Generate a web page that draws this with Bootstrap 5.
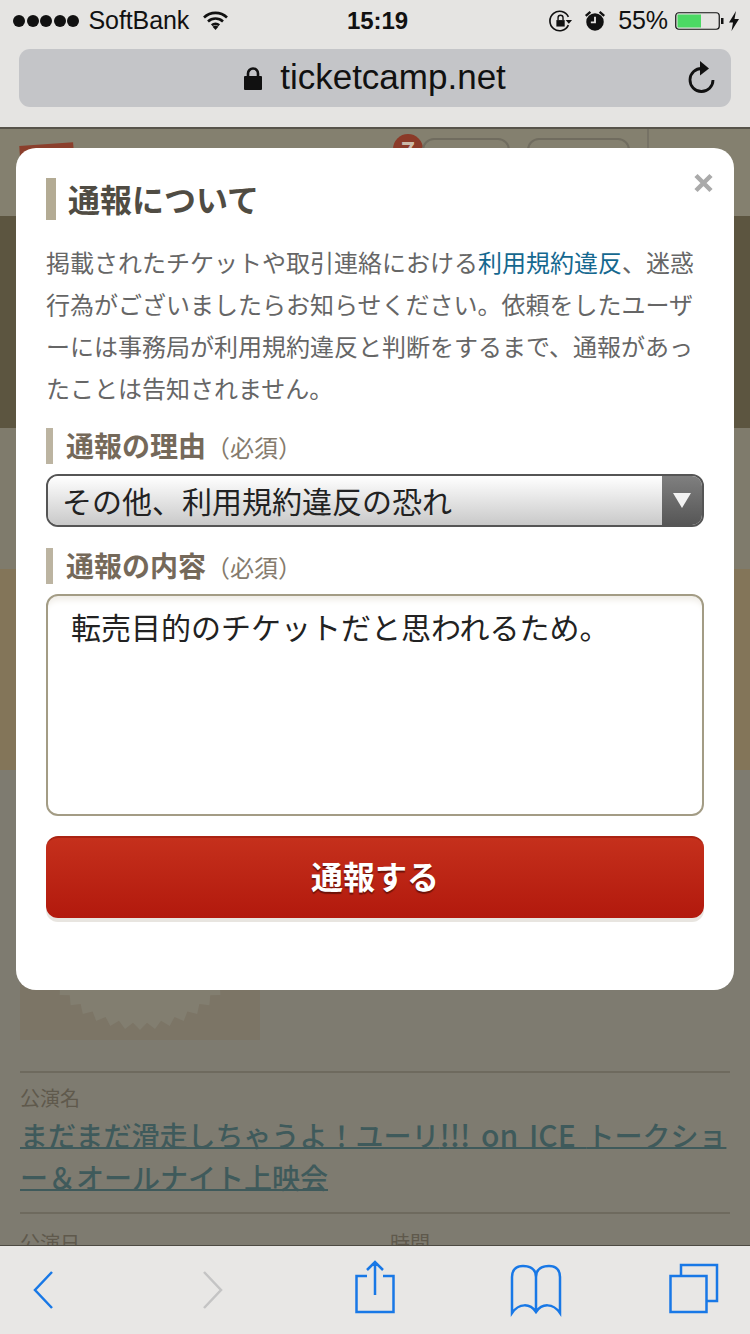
<!DOCTYPE html>
<html lang="ja">
<head>
<meta charset="utf-8">
<title>通報について</title>
<link rel="stylesheet" href="https://cdn.jsdelivr.net/npm/bootstrap@5.3.0/dist/css/bootstrap.min.css">
<style>
:root{--jp:"Noto Sans CJK JP","Liberation Sans",sans-serif;--ui:"Liberation Sans","Noto Sans CJK JP",sans-serif;}
html,body{height:1334px;overflow:hidden;}
body{width:750px;font-family:var(--jp);background:#827e70;}
.shell{height:1334px;}
/* browser chrome */
.chrome-top{height:129px;background:#e5e4e2;border-bottom:2px solid #57534a;flex:none;font-family:var(--ui);}
.statusrow{height:41px;display:grid;grid-template-columns:1fr auto 1fr;align-items:center;padding:0 10px 0 13px;color:#111;font-size:25px;letter-spacing:-.1px;}
.clock{font-weight:700;font-size:24px;padding-left:2px;}
.sigdot{width:12px;height:12px;border-radius:50%;background:#111;display:inline-block;margin-right:1.500px;flex:none;}
.carrier{margin-left:8px;}
.wifi{margin-left:13px;}
.alarm{margin-left:9px;}
.pct{margin-left:11px;}
.batt{margin-left:7px;}
.urlpill{height:58px;margin:8px 19px 0;background:#c4c5c8;border-radius:11px;font-size:35px;color:#111;}
.urlpill .host{margin-left:18px;padding-bottom:2px;}
.reload{right:16px;top:12px;}
/* dimmed page */
.pagearea{height:1116px;overflow:hidden;position:relative;background:#7e7b70;flex:none;}
.pg-head{height:87px;background:#84806f;position:relative;padding-top:15px;}
.pg-logo{width:54px;height:24px;background:#8b3f2c;transform:rotate(-4deg);margin-left:20px;}
.pg-badge{width:30px;height:30px;border-radius:50%;background:#8b3a28;color:#cbb9a8;font-size:24px;font-weight:700;position:absolute;left:393px;top:5px;line-height:32px;}
.pg-chip{height:40px;border:2px solid #706c5f;border-radius:12px;position:absolute;top:9px;}
.pg-chip.a{left:422px;width:88px;}
.pg-chip.b{left:527px;width:103px;}
.pg-sep{position:absolute;left:647px;top:0;bottom:0;width:2px;background:#767265;}
.band-dark{height:212px;background:#5c5540;}
.band-mid{height:141px;background:#7f7b6c;}
.band-tan{height:201px;background:#837559;}
.pg-body{padding:30px 20px 0;}
.pg-art{width:240px;height:240px;background:#7c7566;margin-bottom:31px;}
.pg-art svg{display:block;}
.pg-rule{height:2px;background:#6e6a5e;}
.pg-cap{font-size:20px;color:#5f594c;line-height:24px;}
.cap-a{margin-top:13px;}
.cap-b{margin-top:17px;}
.pg-link{font-size:28px;line-height:42px;color:#3f5a5b;text-decoration:underline;text-decoration-thickness:2px;text-underline-offset:0;display:block;font-weight:500;margin:3px 0 14px;}
.pg-link .latin{font-size:30px;word-spacing:4px;}
.halfcol{width:370px;}
/* dialog */
.dlg{position:absolute;left:16px;top:19px;width:718px;height:842px;background:#fff;border-radius:20px;padding:30px 30px 0;}
.dlg-close{position:absolute;left:678px;top:25px;width:19px;height:20px;padding:0;border:0;background:none;display:block;}
.dlg-title{border-left:10px solid #b3ab94;height:42px;padding-left:12px;font-size:32px;line-height:40px;font-weight:700;color:#504c43;margin:0 0 21px;}
.dlg-text{font-size:24px;line-height:42px;color:#666;margin:0 0 19px;}
.dlg-text a{color:#15688f;text-decoration:none;}
.fld-label{border-left:7px solid #bcb4a1;height:36px;padding-left:13px;font-size:28px;line-height:34px;font-weight:700;color:#75695a;margin:0 0 10px;display:block;}
.fld-label small{font-size:24px;font-weight:400;color:#857b6d;}
.selectbox{height:53px;border:2px solid #555;border-radius:12px;overflow:hidden;margin-bottom:21px;}
.selectbox select{appearance:none;-webkit-appearance:none;border:0;outline:0;flex:1 1 auto;min-width:0;height:100%;padding:0 0 2px 14px;font:400 30px var(--jp);color:#222;background:linear-gradient(#fff,#c9c9c9);}
.selectarrow{width:40px;flex:none;background:linear-gradient(#7f7f7f,#565656);}
.selectarrow i{display:block;width:0;height:0;border-left:9px solid transparent;border-right:9px solid transparent;border-top:15px solid #f2f2f2;}
.memo{height:222px;border:2px solid #a39c85;border-radius:12px;box-shadow:inset 0 8px 6px -4px #efece6;padding:10px 23px;font:400 30px/40px var(--jp);color:#222;resize:none;display:block;width:100%;margin-bottom:20px;}
.memo:focus{border-color:#a39c85;box-shadow:inset 0 8px 6px -4px #efece6;}
.sendbtn{height:82px;width:100%;border:0;border-top:2px solid #aa2312;border-radius:12px;background:linear-gradient(#c5301c,#b2190d);color:#fff;font-size:32px;font-weight:700;text-shadow:0 2px 1px #6e1208;box-shadow:0 4px 0 #e8e5e0;padding:0 0 6px;}
/* toolbar */
.chrome-bot{height:89px;background:#e8e7e5;border-top:1px solid #4d4a42;flex:none;}
.chrome-bot svg{display:block;fill:none;stroke:#1878e6;stroke-width:2.500;margin-top:-1px;}
.ti1{margin-left:33px;}
.ti2{margin-left:150px;}.ti3{margin-left:132px;}.ti4{margin-left:115px;}.ti5{margin-left:107px;}
.chrome-bot svg.ti2{stroke:#c4c4c4;}
</style>
</head>
<body>
<div class="shell d-flex flex-column">
  <header class="chrome-top">
    <div class="statusrow">
      <div class="d-flex align-items-center">
        <span class="sigdot"></span><span class="sigdot"></span><span class="sigdot"></span><span class="sigdot"></span><span class="sigdot"></span>
        <span class="carrier">SoftBank</span>
        <svg class="wifi" width="27" height="21" viewBox="0 0 27 21"><path d="M2 7.500a16.500 16.500 0 0 1 23 0M6 11.500a11 11 0 0 1 15 0M9.800 15.200a5.600 5.600 0 0 1 7.400 0" fill="none" stroke="#111" stroke-width="2.600"/><path d="M10.600 16.800a4.400 4.400 0 0 1 5.800 0L13.500 20z" fill="#111"/></svg>
      </div>
      <div class="clock">15:19</div>
      <div class="d-flex align-items-center justify-content-end">
        <svg width="26" height="24" viewBox="0 0 28 26"><path d="M22 8.500A10.500 10.500 0 1 0 22 17.500" fill="none" stroke="#111" stroke-width="1.800"/><path d="M19 12h7l-3.500 4z" fill="#111"/><path d="M9 12h9v7H9z" fill="#111"/><path d="M10.800 12V9.500a2.700 2.700 0 0 1 5.400 0V12" fill="none" stroke="#111" stroke-width="1.500"/></svg>
        <svg class="alarm" width="24" height="24" viewBox="0 0 26 26"><circle cx="13" cy="14" r="9.500" fill="#111"/><path d="M13 8.500V14.500H8.500" fill="none" stroke="#e5e4e2" stroke-width="2"/><path d="M3 7.500L8 3M23 7.500L18 3" stroke="#111" stroke-width="2.500"/></svg>
        <span class="pct">55%</span>
        <svg class="batt" width="49" height="18" viewBox="0 0 49 18"><rect x=".75" y=".75" width="43.500" height="16.500" rx="3" fill="none" stroke="#111" stroke-width="1.200"/><rect x="2.500" y="2.500" width="23.500" height="13" fill="#4cd964"/><path d="M46 6h2.500v6H46z" fill="#111"/></svg>
        <svg class="ms-1" width="12" height="20" viewBox="0 0 12 20"><path d="M8 0L1 11.500h4L3.500 20 11 8H6.500z" fill="#111"/></svg>
      </div>
    </div>
    <div class="urlpill d-flex align-items-center justify-content-center position-relative">
      <svg width="18" height="23" viewBox="0 0 18 23"><rect y="9" width="18" height="14" rx="1" fill="#111"/><path d="M4 10V6.500a5 5 0 0 1 10 0V10" fill="none" stroke="#111" stroke-width="2.600"/></svg>
      <span class="host">ticketcamp.net</span>
      <svg class="position-absolute reload" width="28" height="34" viewBox="0 0 28 34"><path d="M15 7.500A11.500 11.500 0 1 0 26 19" fill="none" stroke="#111" stroke-width="2.800"/><path d="M13 0l9 7.500-9 7z" fill="#111"/></svg>
    </div>
  </header>

  <main class="pagearea">
    <div class="pg-head">
      <div class="pg-logo"></div>
      <span class="pg-badge d-flex justify-content-center">7</span>
      <span class="pg-chip a"></span><span class="pg-chip b"></span><span class="pg-sep"></span>
    </div>
    <div class="band-dark"></div>
    <div class="band-mid"></div>
    <div class="band-tan"></div>
    <div class="pg-body">
      <div class="pg-art"><svg id="burst" width="240" height="240" viewBox="0 0 240 240"></svg></div>
      <div class="pg-rule"></div>
      <div class="pg-cap cap-a">公演名</div>
      <a class="pg-link" href="#">まだまだ滑走しちゃうよ！ユーリ<span class="latin">!!! on ICE </span>トークショー＆オールナイト上映会</a>
      <div class="pg-rule"></div>
      <div class="d-flex cap-b"><div class="pg-cap halfcol">公演日</div><div class="pg-cap">時間</div></div>
    </div>

    <section class="dlg">
      <button class="dlg-close" type="button" aria-label="閉じる"><svg width="19" height="20" viewBox="0 0 19 20" class="d-block"><path d="M2 2.500L17 17.500M17 2.500L2 17.500" stroke="#aaa" stroke-width="4.500"/></svg></button>
      <h2 class="dlg-title">通報について</h2>
      <p class="dlg-text">掲載されたチケットや取引連絡における<a href="#">利用規約違反</a>、迷惑行為がございましたらお知らせください。依頼をしたユーザーには事務局が利用規約違反と判断をするまで、通報があったことは告知されません。</p>
      <label class="fld-label">通報の理由<small>（必須）</small></label>
      <div class="selectbox d-flex">
        <select><option>その他、利用規約違反の恐れ</option></select>
        <span class="selectarrow d-flex align-items-center justify-content-center"><i></i></span>
      </div>
      <label class="fld-label">通報の内容<small>（必須）</small></label>
      <textarea class="memo form-control">転売目的のチケットだと思われるため。</textarea>
      <button class="sendbtn btn" type="button">通報する</button>
    </section>
  </main>

  <footer class="chrome-bot d-flex">
    <svg class="ti1" width="20" height="88" viewBox="0 0 20 88"><path d="M19 27L2 45 19 63"/></svg>
    <svg class="ti2" width="20" height="88" viewBox="0 0 20 88"><path d="M1 27L18 45 1 63"/></svg>
    <svg class="ti3" width="40" height="88" viewBox="0 0 40 88"><path d="M12 31H1.500V67H38.500V31H28M20 50V17M12 25L20 17 28 25"/></svg>
    <svg class="ti4" width="52" height="88" viewBox="0 0 52 88"><path d="M26 32C26 24 20 21 13 21 6 21 2 25 2 32V68C9 58 20 58 26 67 32 58 43 58 50 68V32C50 25 46 21 39 21 32 21 26 24 26 32V67"/></svg>
    <svg class="ti5" width="50" height="88" viewBox="0 0 50 88"><path d="M12 31V20H48V56H38M1.500 31H37.500V67H1.500z"/></svg>
  </footer>
</div>
<script src="https://cdn.jsdelivr.net/npm/bootstrap@5.3.0/dist/js/bootstrap.bundle.min.js"></script>
<script>
(function(){var p=[],n=92,i,a,r;for(i=0;i<n;i++){a=i/n*2*Math.PI;r=i%2?110:103;p.push((120+r*Math.cos(a)).toFixed(1)+','+(120+r*Math.sin(a)).toFixed(1));}
document.getElementById('burst').innerHTML='<polygon fill="#827e70" points="'+p.join(' ')+'"/>';})();
</script>
</body>
</html>
